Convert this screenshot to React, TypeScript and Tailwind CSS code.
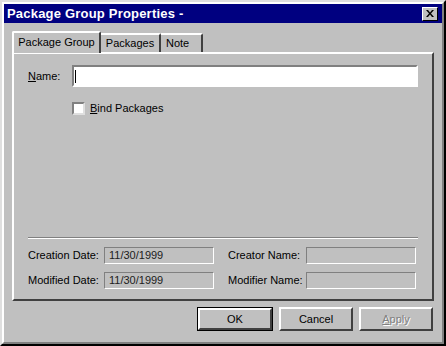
import React from 'react';

const font = "font-['Liberation_Sans',Arial,sans-serif]";

const Field: React.FC<{ value?: string; w: string }> = ({ value, w }) => (
  <div
    className={`${w} h-[17px] border border-t-[#808080] border-l-[#808080] border-r-white border-b-white px-1 text-[11px] leading-[15px] text-[#202020]`}
  >
    {value}
  </div>
);

const Button: React.FC<{ label: React.ReactNode; primary?: boolean; disabled?: boolean }> = ({ label, primary, disabled }) => (
  <div className={`${primary ? 'border border-black' : ''}`}>
    <div
      className={`w-[74px] ${primary ? 'h-[22px]' : 'h-[24px]'} flex items-center justify-center border-2 border-t-white border-l-white border-r-[#404040] border-b-[#404040] text-[11px] ${
        disabled ? 'text-[#808080] [text-shadow:1px_1px_0_#fff]' : 'text-black'
      }`}
    >
      {label}
    </div>
  </div>
);

export default function App() {
  return (
    <div className={`${font} w-[446px] h-[346px] bg-[#c0c0c0] border-2 border-t-[#dfdfdf] border-l-[#dfdfdf] border-r-black border-b-black`}>
      <div className="h-full border-2 border-t-white border-l-white border-r-[#808080] border-b-[#808080] flex flex-col">
        {/* title bar */}
        <div className="h-[19px] bg-[#000080] flex items-center justify-between pl-[3px] pr-[4px]">
          <span className="text-white font-bold text-[13px] tracking-[0.2px]">Package Group Properties -</span>
          <div className="w-[16px] h-[14px] bg-[#c0c0c0] border border-t-white border-l-white border-r-black border-b-black flex items-center justify-center">
            <svg width="8" height="7" viewBox="0 0 8 7">
              <path d="M0 0h2l2 2.5L6 0h2L5 3.5 8 7H6L4 4.5 2 7H0l3-3.5z" fill="black" />
            </svg>
          </div>
        </div>

        {/* tabs */}
        <div className="flex items-end pl-[8px] pt-[7px] h-[29px] relative z-10">
          <div className="w-[89px] h-[22px] flex items-center justify-center text-[11px] bg-[#c0c0c0] border-2 border-b-0 border-t-white border-l-white border-r-[#404040] -mb-[1px] pb-[1px] rounded-t-[2px]">
            Package Group
          </div>
          <div className="w-[60px] h-[19px] flex items-center justify-center text-[11px] border-t-2 border-r-2 border-t-white border-r-[#404040] rounded-tr-[2px]">
            Packages
          </div>
          <div className="w-[42px] h-[19px] pl-[5px] flex items-center text-[11px] border-t-2 border-r-2 border-t-white border-r-[#404040] rounded-tr-[2px]">
            Note
          </div>
        </div>

        {/* panel */}
        <div className="mx-[8px] h-[249px] border-2 border-t-white border-l-white border-r-[#404040] border-b-[#404040] flex flex-col px-[14px] pt-[11px]">
          <div className="flex items-center h-[22px]">
            <span className="w-[44px] text-[11px]"><u>N</u>ame:</span>
            <div className="flex-1 h-[22px] bg-white border-2 border-t-[#808080] border-l-[#808080] border-r-white border-b-white flex items-center pl-[1px]">
              <div className="w-px h-[13px] bg-black" />
            </div>
          </div>
          <div className="flex items-center mt-[14px] ml-[44px] h-[14px]">
            <div className="w-[13px] h-[13px] bg-white border-2 border-t-[#808080] border-l-[#808080] border-r-[#dfdfdf] border-b-[#dfdfdf]" />
            <span className="ml-[5px] text-[11px]"><u>B</u>ind Packages</span>
          </div>
          <div className="mt-[122px] h-[2px] border-t border-t-[#808080] border-b border-b-white" />
          <div className="mt-[8px] grid grid-cols-[76px_110px_14px_78px_110px] items-center gap-y-[8px] text-[11px]">
            <span>Creation Date:</span>
            <Field value="11/30/1999" w="w-[110px]" />
            <span />
            <span>Creator Name:</span>
            <Field w="w-[110px]" />
            <span>Modified Date:</span>
            <Field value="11/30/1999" w="w-[110px]" />
            <span />
            <span>Modifier Name:</span>
            <Field w="w-[110px]" />
          </div>
        </div>

        {/* buttons */}
        <div className="flex justify-end gap-[6px] pr-[9px] pt-[6px]">
          <Button label="OK" primary />
          <Button label="Cancel" />
          <Button label={<><u>A</u>pply</>} disabled />
        </div>
      </div>
    </div>
  );
}
